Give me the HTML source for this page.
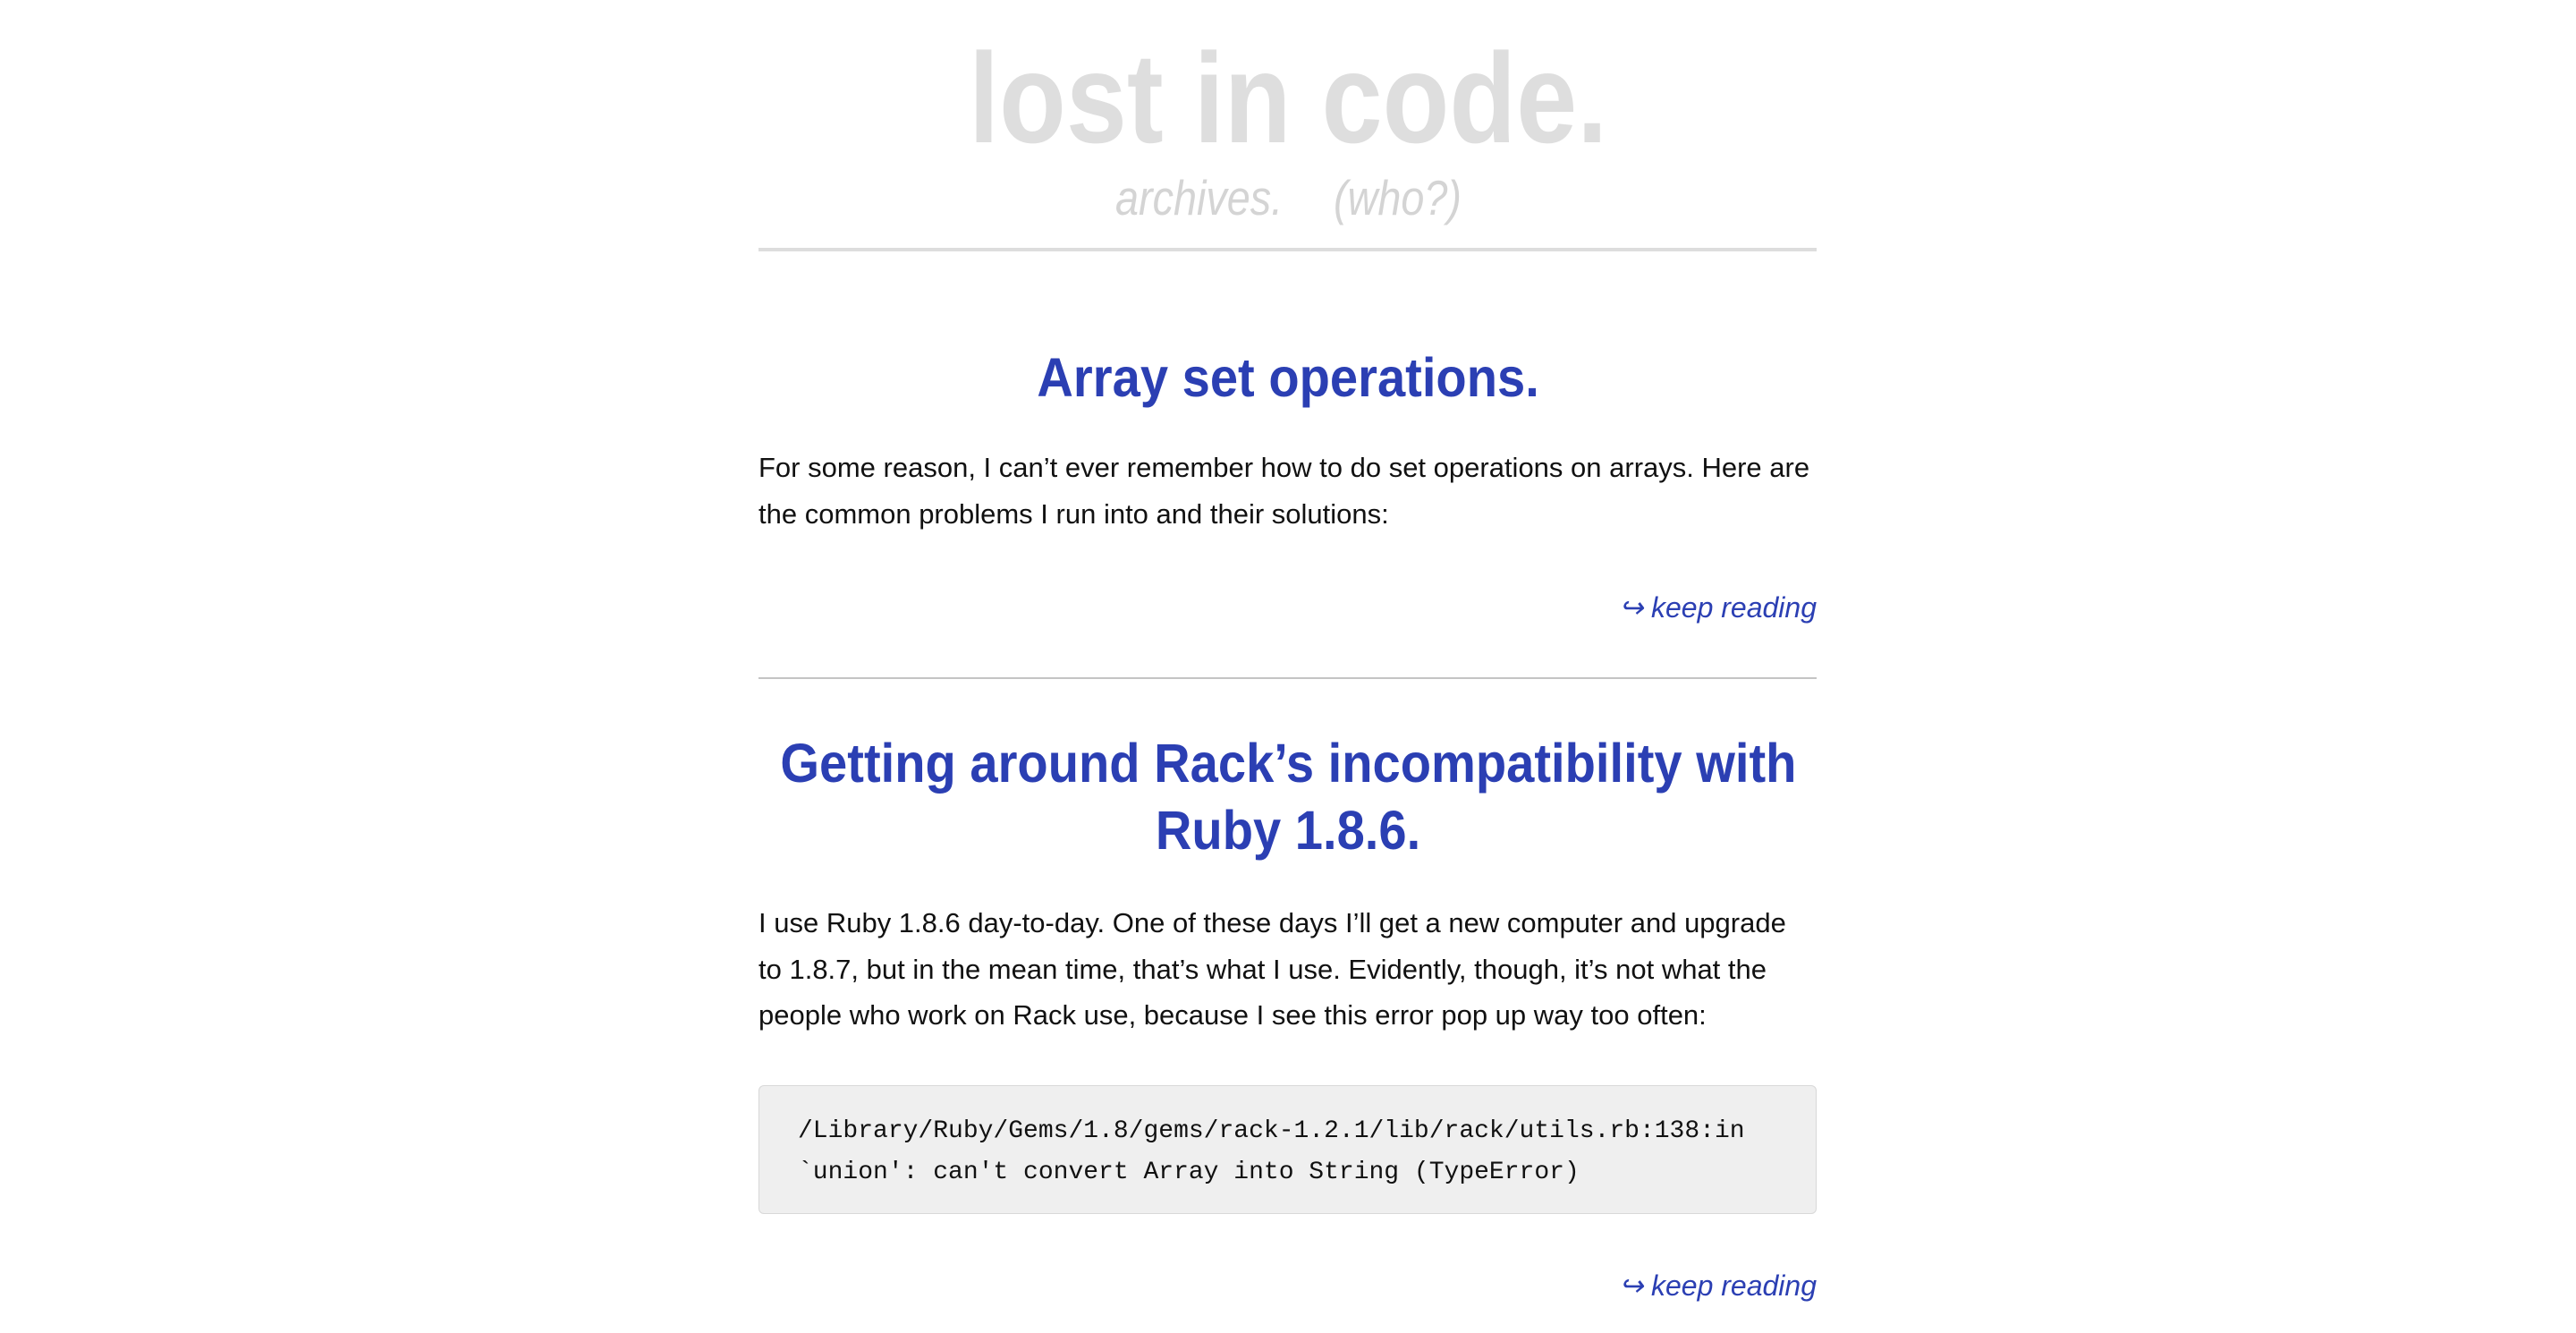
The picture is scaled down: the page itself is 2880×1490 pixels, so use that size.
<!DOCTYPE html>
<html><head><meta charset="utf-8"><style>
html,body{margin:0;padding:0;background:#fff;width:2880px;height:1490px;overflow:hidden;position:relative}
.a{position:absolute;white-space:nowrap}
.t{font-family:"Liberation Sans",Arial,sans-serif;font-weight:bold;font-size:143px;line-height:1;color:#dedede;left:0;width:2880px;text-align:center;top:39px}
.t span{display:inline-block;transform:scaleX(.856);transform-origin:center}
.s{font-family:"Liberation Sans",Arial,sans-serif;font-style:italic;font-size:55px;line-height:1;color:#d4d4d4;top:194px}
.s span{display:inline-block;transform:scaleX(.85);transform-origin:left}
.hr{position:absolute;left:848px;width:1183px}
.h{font-family:"Liberation Sans",Arial,sans-serif;font-weight:bold;font-size:61px;line-height:75px;color:#2b3fb3;left:0;width:2880px;text-align:center}
.h span{display:inline-block;transform:scaleX(.92);transform-origin:center}
.p{font-family:"Liberation Sans",Arial,sans-serif;font-size:31px;line-height:52px;color:#111;left:848px}
.p span{display:inline-block;transform:scaleX(1.0);transform-origin:left}
.k{font-family:"Liberation Sans",Arial,sans-serif;font-style:italic;font-size:32px;line-height:1;color:#2b3fb3;right:849px}
.k span{display:inline-block}
.code{position:absolute;left:848px;top:1213px;width:1181px;height:142px;background:#efefef;border:1px solid #d8d8d8;border-radius:6px}
.m{font-family:"Liberation Mono",monospace;font-size:28px;line-height:46px;color:#111;left:892px}
</style></head><body>
<div class="a t"><span>lost in code.</span></div>
<div class="a s" style="left:1247px"><span>archives.</span></div>
<div class="a s" style="left:1491px"><span>(who?)</span></div>
<div class="hr" style="top:277px;height:4px;background:#dddddd"></div>

<div class="a h" style="top:385px"><span>Array set operations.</span></div>
<div class="a p" style="top:497px"><span>For some reason, I can’t ever remember how to do set operations on arrays. Here are</span></div>
<div class="a p" style="top:549px"><span>the common problems I run into and their solutions:</span></div>
<div class="a k" style="top:663px"><span>↪ keep reading</span></div>
<div class="hr" style="top:757px;height:2px;background:#c4c4c4"></div>

<div class="a h" style="top:816px"><span>Getting around Rack’s incompatibility with</span></div>
<div class="a h" style="top:891px"><span>Ruby 1.8.6.</span></div>
<div class="a p" style="top:1006px"><span>I use Ruby 1.8.6 day-to-day. One of these days I’ll get a new computer and upgrade</span></div>
<div class="a p" style="top:1058px"><span>to 1.8.7, but in the mean time, that’s what I use. Evidently, though, it’s not what the</span></div>
<div class="a p" style="top:1109px"><span>people who work on Rack use, because I see this error pop up way too often:</span></div>
<div class="code"></div>
<div class="a m" style="top:1242px">/Library/Ruby/Gems/1.8/gems/rack-1.2.1/lib/rack/utils.rb:138:in</div>
<div class="a m" style="top:1288px">`union': can't convert Array into String (TypeError)</div>
<div class="a k" style="top:1421px"><span>↪ keep reading</span></div>
</body></html>
